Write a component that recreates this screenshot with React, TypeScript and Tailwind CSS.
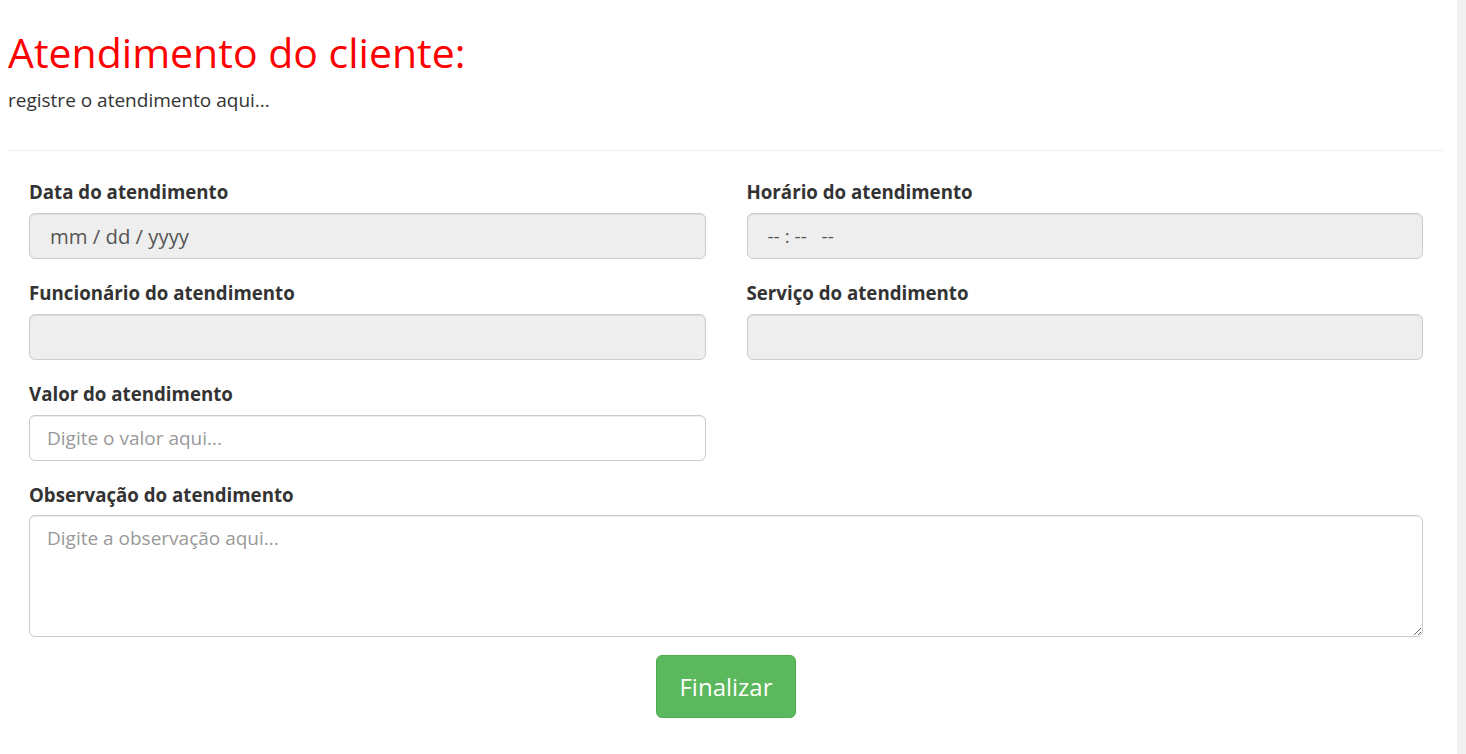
import React from 'react';

const inputBase =
  "w-full h-[46px] px-[17px] rounded-[6px] border border-[#ccc] text-[19px] text-[#555] outline-none shadow-[inset_0_1px_1px_rgba(0,0,0,0.075)]";

const Label = ({ children }: { children: React.ReactNode }) => (
  <label className="block mb-[9px] text-[18.7px] font-bold text-[#333] leading-[24px]">{children}</label>
);

export default function App() {
  return (
    <div className="flex min-h-screen bg-white font-['Open_Sans',sans-serif] text-[#333]">
      <div className="flex-1 min-w-0 pl-2 pr-[14px]">
        <h1 className="mt-[30px] text-[41px] leading-[44px] text-[#ff0000] font-normal">Atendimento do cliente:</h1>
        <p className="mt-[14px] text-[19px] leading-[24px]">registre o atendimento aqui...</p>
        <hr className="mt-[38px] border-t border-[#eee]" />

        <form className="pl-[21px] pr-[20px] pt-[29px]">
          <div className="grid grid-cols-2 gap-x-[41px] gap-y-[22px]">
            <div>
              <Label>Data do atendimento</Label>
              <input disabled readOnly value="mm / dd / yyyy" className={`${inputBase} bg-[#eee] px-[20px] text-[20.3px]`} />
            </div>
            <div>
              <Label>Horário do atendimento</Label>
              <input disabled readOnly value="-- : --   --" className={`${inputBase} bg-[#eee] px-[20px] whitespace-pre text-[15px]`} />
            </div>
            <div>
              <Label>Funcionário do atendimento</Label>
              <input disabled readOnly className={`${inputBase} bg-[#eee]`} />
            </div>
            <div>
              <Label>Serviço do atendimento</Label>
              <input disabled readOnly className={`${inputBase} bg-[#eee]`} />
            </div>
            <div>
              <Label>Valor do atendimento</Label>
              <input placeholder="Digite o valor aqui..." className={`${inputBase} bg-white placeholder:text-[#999]`} />
            </div>
            <div />
            <div className="col-span-2">
              <label className="block mb-[8px] text-[18.7px] font-bold text-[#333] leading-[24px]">Observação do atendimento</label>
              <textarea
                placeholder="Digite a observação aqui..."
                className="block w-full h-[122px] px-[17px] py-[10px] rounded-[6px] border border-[#ccc] text-[19px] text-[#555] outline-none placeholder:text-[#999] leading-[24px] shadow-[inset_0_1px_1px_rgba(0,0,0,0.075)]"
              />
            </div>
          </div>
          <div className="flex justify-center mt-[18px]">
            <button
              type="button"
              className="h-[63px] px-[22px] rounded-[6px] bg-[#5cb85c] border border-[#4cae4c] text-white text-[24px]"
            >
              Finalizar
            </button>
          </div>
        </form>
      </div>
      <div className="w-[9px] shrink-0 bg-[#f1f1f1]" />
    </div>
  );
}
